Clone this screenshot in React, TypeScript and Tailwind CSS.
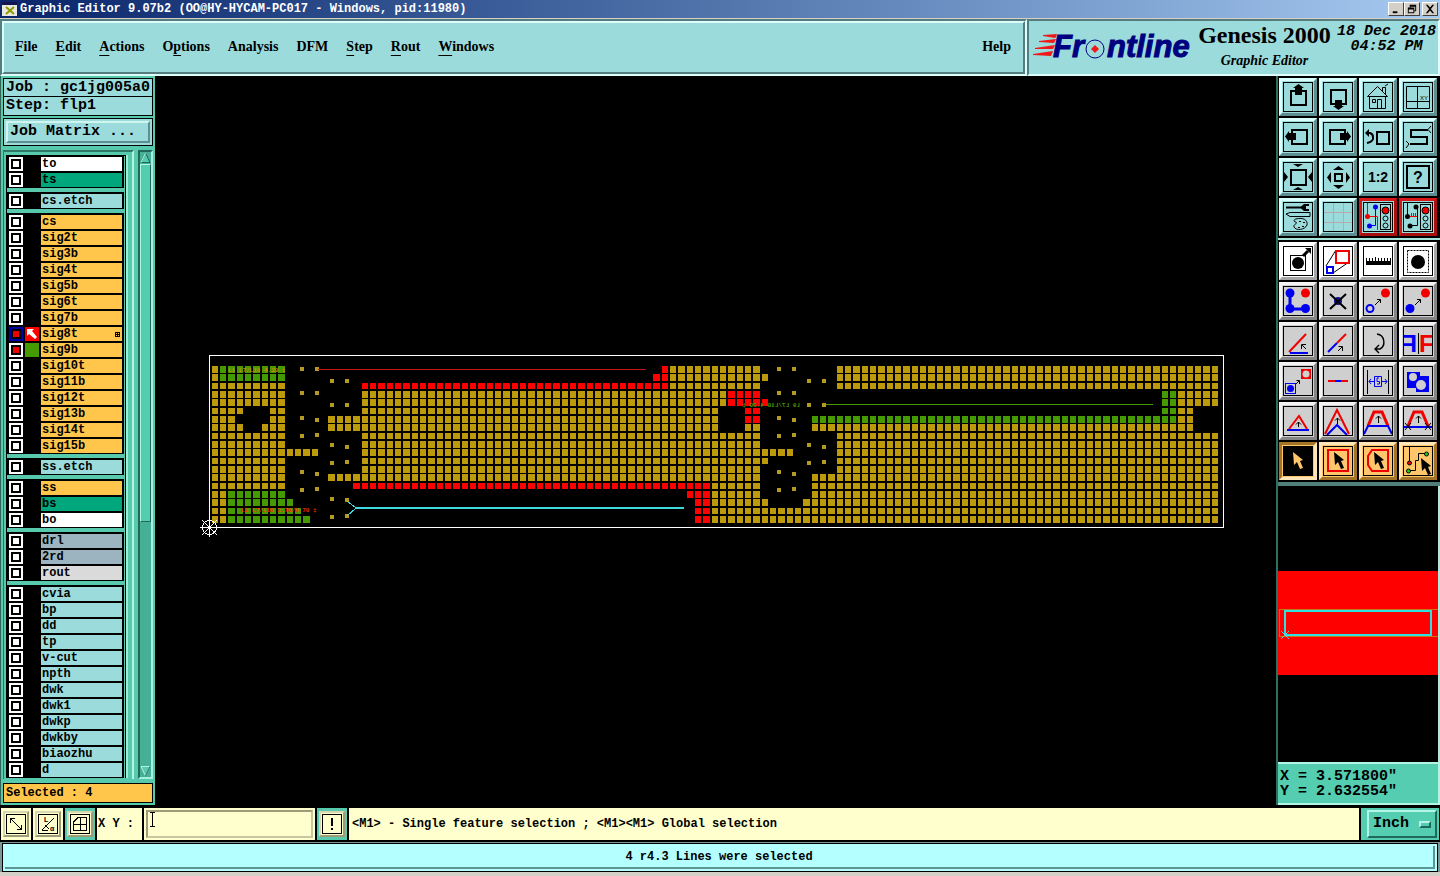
import { ReactNode, useState } from "react";

type Tone = "white" | "green" | "aqua" | "amber" | "steel" | "silver";

interface Layer {
  name: string;
  tone: Tone;
}

const toneClass: Record<Tone, string> = {
  white: "bg-white",
  green: "bg-[#00a67c]",
  aqua: "bg-[#9bdbdb]",
  amber: "bg-[#ffc64b]",
  steel: "bg-[#9cb4c0]",
  silver: "bg-[#dadada]",
};

const make = (tone: Tone, names: string): Layer[] =>
  names.split(" ").map((name) => ({ name, tone }));

const layerGroups: Layer[][] = [
  [...make("white", "to"), ...make("green", "ts")],
  make("aqua", "cs.etch"),
  make("amber", "cs sig2t sig3b sig4t sig5b sig6t sig7b sig8t sig9b sig10t sig11b sig12t sig13b sig14t sig15b"),
  make("aqua", "ss.etch"),
  [...make("amber", "ss"), ...make("green", "bs"), ...make("white", "bo")],
  [...make("steel", "drl 2rd"), ...make("silver", "rout")],
  make("aqua", "cvia bp dd tp v-cut npth dwk dwk1 dwkp dwkby biaozhu d"),
];

const menus: [string, number][] = [
  ["File", 0],
  ["Edit", 0],
  ["Actions", 0],
  ["Options", 1],
  ["Analysis", -1],
  ["DFM", -1],
  ["Step", 0],
  ["Rout", 0],
  ["Windows", 0],
];

const RED = "#f00000";
const BLUE = "#0000f0";

/* ---------- board ---------- */

// row -> runs of [first column, last column, colour]
type Run = [number, number, "y" | "r" | "g"];

const copper: Run[][] = [
  [[0, 0, "y"], [1, 8, "g"], [54, 54, "r"], [55, 65, "y"], [75, 120, "y"]],
  [[0, 0, "y"], [1, 8, "g"], [53, 54, "r"], [55, 66, "y"], [75, 120, "y"]],
  [[0, 8, "y"], [18, 54, "r"], [55, 65, "y"], [75, 120, "y"]],
  [[0, 8, "y"], [18, 61, "y"], [62, 65, "r"], [114, 115, "g"], [116, 120, "y"]],
  [[0, 8, "y"], [18, 61, "y"], [62, 66, "r"], [114, 115, "g"], [116, 120, "y"]],
  [[0, 3, "y"], [7, 8, "y"], [18, 60, "y"], [64, 65, "r"], [114, 115, "g"], [116, 117, "y"]],
  [[0, 2, "y"], [7, 8, "y"], [14, 60, "y"], [64, 65, "r"], [72, 115, "g"], [116, 117, "y"]],
  [[0, 3, "y"], [6, 8, "y"], [14, 60, "y"], [64, 65, "y"], [72, 117, "y"]],
  [[0, 8, "y"], [18, 65, "y"], [75, 120, "y"]],
  [[0, 8, "y"], [18, 65, "y"], [75, 120, "y"]],
  [[0, 12, "y"], [18, 69, "y"], [75, 120, "y"]],
  [[0, 8, "y"], [18, 66, "y"], [75, 120, "y"]],
  [[0, 8, "y"], [18, 65, "y"], [75, 120, "y"]],
  [[0, 8, "y"], [14, 65, "y"], [72, 120, "y"]],
  [[0, 8, "y"], [17, 59, "r"], [60, 65, "y"], [72, 120, "y"]],
  [[0, 1, "y"], [2, 8, "g"], [57, 59, "r"], [60, 65, "y"], [72, 120, "y"]],
  [[0, 1, "y"], [2, 9, "g"], [58, 59, "r"], [60, 66, "y"], [71, 120, "y"]],
  [[0, 1, "y"], [2, 10, "g"], [58, 59, "r"], [60, 120, "y"]],
  [[0, 1, "y"], [2, 11, "g"], [58, 59, "r"], [60, 120, "y"]],
];

const copperFill = { y: "#bd9a0c", r: "#ff0000", g: "#459a00" };

const padsLeft: [number, number][] = [
  [300, 367], [315, 367], [330, 379], [345, 379], [300, 391], [315, 391],
  [330, 403], [345, 403], [300, 416], [315, 418], [300, 434], [315, 433],
  [330, 443], [345, 445], [330, 461], [345, 460], [300, 470], [315, 472],
  [300, 488], [315, 487],
];
const pads: [number, number][] = [
  ...padsLeft,
  ...padsLeft.map(([x, y]): [number, number] => [x + 477, y]),
  [330, 497], [345, 498], [330, 515], [345, 514],
];

function Board() {
  const cells: ReactNode[] = [];
  copper.forEach((runs, r) => {
    const y = Math.round(366 + (r * 25) / 3);
    runs.forEach(([from, to, c]) => {
      for (let i = from; i <= to; i++) {
        cells.push(
          <rect
            key={`${r}-${i}`}
            x={Math.floor(212 + (i * 25) / 3)}
            y={y}
            width={i % 3 === 2 ? 7 : 6}
            height={r % 3 === 2 ? 6 : 7}
            fill={copperFill[c]}
          />
        );
      }
    });
  });

  return (
    <svg viewBox="155 76 1121 729" className="w-full h-full block" shapeRendering="crispEdges">
      {cells}
      {pads.map(([x, y], i) => (
        <rect key={i} x={x} y={y} width="4" height="4" fill="#b39a22" />
      ))}
      <g fontFamily="Liberation Mono, monospace" fontSize="6" fontWeight="700">
        <text x="228" y="372" fill="#d08a00">L1 L7/L10 4.20 ‡</text>
        <text x="241" y="512" fill="#ff2800">L8 L7/L10 3.70/0.70 ‡</text>
        <text x="-800" y="407" fill="#459a00" transform="scale(-1 1)">L9 L7/L10 4.20 ‡</text>
      </g>
      <rect x="209.5" y="355.5" width="1014" height="172" fill="none" stroke="#fff" />
      <rect x="318" y="369" width="328" height="1" fill="#c01818" />
      <rect x="826" y="404" width="327" height="1" fill="#459a00" />
      <rect x="356" y="507" width="328" height="2" fill="#3fd8dc" />
      <path d="M347 501L356 508L347 516" stroke="#3fd8dc" fill="none" />
      <g stroke="#fff" fill="none">
        <circle cx="209.5" cy="527.5" r="7" />
        <path d="M200 527.5H219M209.5 518V537M202 520L217 535M217 520L202 535" />
      </g>
    </svg>
  );
}

/* ---------- toolbar icons, drawn on a 30 x 30 grid ---------- */

interface Tool {
  label: string;
  art: ReactNode;
}

const trafficLight = (
  <g stroke="#000">
    <rect x="17.5" y="2.5" width="10" height="25" fill="#9bdbdb" />
    <circle cx="22.5" cy="8.5" r="3.5" fill={RED} />
    <circle cx="22.5" cy="16.5" r="2.5" fill="none" />
    <circle cx="22.5" cy="23.5" r="2.5" fill="none" />
  </g>
);

const cursor = "M0 0L10 8L7 9L10 16L7 17L4 10L1 13Z";

const viewTools: Tool[] = [
  {
    label: "Pan up",
    art: (
      <>
        <path d="M8 9H23V23H8Z" fill="none" stroke="#000" strokeWidth="2" />
        <path d="M15.5 2L21 6H19V13H12V6H10Z" />
      </>
    ),
  },
  {
    label: "Pan down",
    art: (
      <>
        <path d="M8 8H23V22H8Z" fill="none" stroke="#000" strokeWidth="2" />
        <path d="M15.5 28L21 24H19V18H12V24H10Z" />
      </>
    ),
  },
  {
    label: "Home",
    art: (
      <path
        d="M4.5 14.5L14.5 4.5L24.5 14.5ZM6.5 14.5V26.5H22.5V14.5M14.5 26.5V17.5H18.5V26.5M9.5 17.5H12.5V20.5H9.5ZM19.5 9V5.5H22.5V12.5M22 4L25 2"
        fill="none"
        stroke="#000"
      />
    ),
  },
  {
    label: "Zoom window",
    art: (
      <>
        <path d="M3.5 4.5H26.5V26.5H3.5Z" fill="none" stroke="#000" />
        <path d="M14.5 4V26M4 19.5H26" stroke="#000" />
        <text x="17" y="18" fontFamily="Liberation Sans, sans-serif" fontSize="6">
          XY
        </text>
      </>
    ),
  },
  {
    label: "Pan left",
    art: (
      <>
        <path d="M9 8H24V22H9Z" fill="none" stroke="#000" strokeWidth="2" />
        <path d="M2 14.5L6 9V11H13V18H6V20Z" />
      </>
    ),
  },
  {
    label: "Pan right",
    art: (
      <>
        <path d="M7 8H22V22H7Z" fill="none" stroke="#000" strokeWidth="2" />
        <path d="M28 14.5L24 9V11H17V18H24V20Z" />
      </>
    ),
  },
  {
    label: "Previous view",
    art: (
      <>
        <path d="M14 10H26V22H14Z" fill="none" stroke="#000" strokeWidth="2" />
        <path d="M5 11H7Q10 12 10 15V17Q9 20 4 21" fill="none" stroke="#000" strokeWidth="2" />
        <path d="M2 11L6 7V15Z" />
      </>
    ),
  },
  {
    label: "Snap trace",
    art: (
      <>
        <path d="M25 8H8V15H24V22H7" fill="none" stroke="#000" strokeWidth="2" />
        <path d="M28 4L25 7.5L28 11M3 19L6 22L3 26" fill="none" stroke="#000" />
      </>
    ),
  },
  {
    label: "Zoom in",
    art: (
      <>
        <path d="M8 8H23V23H8Z" fill="none" stroke="#000" strokeWidth="2" />
        <path d="M10 2H20L15 5ZM10 28H20L15 25ZM1 10V20L5 15ZM29 10V20L25 15Z" />
      </>
    ),
  },
  {
    label: "Zoom out",
    art: (
      <>
        <path d="M12 12H19V19H12Z" fill="none" stroke="#000" strokeWidth="2" />
        <path d="M10 8H21L15.5 4ZM10 23H21L15.5 27ZM8 10V21L4 15.5ZM23 10V21L27 15.5Z" />
      </>
    ),
  },
  {
    label: "Zoom factor",
    art: (
      <text x="15" y="20" textAnchor="middle" fontFamily="Liberation Sans, sans-serif" fontWeight="700" fontSize="14">
        1:2
      </text>
    ),
  },
  {
    label: "Help",
    art: (
      <>
        <path d="M4 4H26V26H4Z" fill="none" stroke="#000" strokeWidth="2" />
        <text x="15" y="21" textAnchor="middle" fontFamily="Liberation Sans, sans-serif" fontWeight="700" fontSize="16">
          ?
        </text>
      </>
    ),
  },
  {
    label: "Setup",
    art: (
      <>
        <path d="M3 4.5H18L21 2H26V4H23V7H26V9H21L18 6.5H3Z" />
        <path d="M3 12L7 10.5H27V14.5H7Z" fill="none" stroke="#000" />
        <path d="M13 17C20 15 25 18 24 23C22 28 13 29 11 25C10 22 15 22 13 20C10 20 11 17 13 17Z" fill="none" stroke="#000" />
        <path d="M16 19.5H18M20 20.5H22M19 24.5H21M15 25.5H17" fill="none" stroke="#000" />
      </>
    ),
  },
  {
    label: "Grid",
    art: <path d="M10.5 1V29M20.5 1V29M1 10.5H29M1 20.5H29" stroke="#b9a9ad" />,
  },
  {
    label: "Netlist on",
    art: (
      <>
        <path d="M4.5 1V14M4.5 14.5H14.5V28" stroke={RED} fill="none" />
        <circle cx="4.5" cy="14.5" r="2.5" fill={RED} />
        <path d="M12.5 5V23.5H6" stroke={BLUE} fill="none" />
        <circle cx="12.5" cy="5" r="2.5" fill={BLUE} />
        <circle cx="6.5" cy="24" r="2.5" fill={BLUE} />
        {trafficLight}
      </>
    ),
  },
  {
    label: "Netlist off",
    art: (
      <>
        <path d="M4.5 1V14M14.5 5V23.5H6" stroke="#000" fill="none" />
        <circle cx="4.5" cy="14.5" r="2.5" />
        <circle cx="13" cy="5" r="2.5" />
        <circle cx="7" cy="24" r="2.5" />
        <path d="M7 14.5H14M8.5 11V15M10.5 11V15M12.5 11V15" stroke={RED} />
        {trafficLight}
      </>
    ),
  },
];

const measureTools: Tool[] = [
  {
    label: "Select by reference",
    art: (
      <>
        <rect x="7.5" y="9.5" width="15" height="15" fill="none" stroke="#000" />
        <circle cx="15" cy="17" r="6" />
        <path d="M20 10L25 5" stroke="#000" strokeWidth="3" />
        <path d="M22 2H28V8Z" />
      </>
    ),
  },
  {
    label: "Resize",
    art: (
      <>
        <path d="M3 20L13 4M10 27L26 16" stroke="#000" />
        <rect x="13" y="5" width="13" height="12" fill="none" stroke={RED} strokeWidth="2" />
        <rect x="4" y="21" width="6" height="6" fill="none" stroke={BLUE} strokeWidth="2" />
      </>
    ),
  },
  {
    label: "Ruler",
    art: <path d="M3 19V12H4V15H6V12H7V15H9V12H10V15H12V11H13V15H15V12H16V15H18V12H19V15H21V12H22V15H24V12H25V15H27V12H28V19Z" />,
  },
  {
    label: "Area select",
    art: (
      <>
        <rect x="4.5" y="4.5" width="21" height="22" fill="none" stroke="#000" strokeDasharray="2 1" />
        <circle cx="15" cy="16" r="7" />
      </>
    ),
  },
];

const editTools: Tool[] = [
  {
    label: "Copy",
    art: (
      <>
        <path d="M7 7V23H23" fill="none" stroke={BLUE} strokeWidth="3" />
        <circle cx="7" cy="7" r="4.5" fill={BLUE} />
        <circle cx="7" cy="22.5" r="4.5" fill={BLUE} />
        <circle cx="22.5" cy="22.5" r="4.5" fill={BLUE} />
        <circle cx="22.5" cy="7" r="4.5" fill={RED} />
      </>
    ),
  },
  {
    label: "Delete",
    art: (
      <>
        <circle cx="15" cy="15" r="4" fill="#1010a0" />
        <path d="M7 8L23 23M23 8L7 23" stroke="#000" strokeWidth="2" />
      </>
    ),
  },
  {
    label: "Move",
    art: (
      <>
        <circle cx="7" cy="22.5" r="3.5" fill="none" stroke={BLUE} strokeWidth="2" />
        <circle cx="22.5" cy="7" r="4.5" fill={RED} />
        <path d="M12 19L17 14M14 13.5H17.5V17" fill="none" stroke="#000" />
      </>
    ),
  },
  {
    label: "Copy to",
    art: (
      <>
        <circle cx="7" cy="22.5" r="4.5" fill={BLUE} />
        <circle cx="22.5" cy="7" r="4.5" fill={RED} />
        <path d="M12 19L17 14M14 13.5H17.5V17" fill="none" stroke="#000" />
      </>
    ),
  },
  {
    label: "Rotate",
    art: (
      <>
        <path d="M6 26L23 8" stroke={RED} strokeWidth="2" />
        <path d="M7 27H25" stroke={BLUE} strokeWidth="2" />
        <path d="M23 23L19 19M18.5 23V18.5H23" fill="none" stroke="#000" />
      </>
    ),
  },
  {
    label: "Stretch",
    art: (
      <>
        <path d="M5 26L14 17" stroke={BLUE} strokeWidth="2" />
        <path d="M14 17L23 8" stroke={RED} strokeWidth="2" />
        <path d="M15 25L19 21M15.5 20.5H19.5V25" fill="none" stroke="#000" />
      </>
    ),
  },
  {
    label: "Rotate feature",
    art: (
      <>
        <path d="M14 8C22 9 23 20 17 23H12M16 19L12 23L16 27" fill="none" stroke="#000" strokeWidth="1.4" />
      </>
    ),
  },
  {
    label: "Mirror",
    art: (
      <g fontFamily="Liberation Sans, sans-serif" fontWeight="700" fontSize="24">
        <text x="-14" y="26" fill={BLUE} transform="scale(-1 1)">F</text>
        <path d="M15.5 7V28" stroke="#000" />
        <text x="16" y="26" fill={RED}>F</text>
      </g>
    ),
  },
  {
    label: "Transform",
    art: (
      <>
        <rect x="2.5" y="17.5" width="10" height="10" fill="none" stroke={BLUE} />
        <circle cx="7.5" cy="22.5" r="3.5" fill={BLUE} />
        <path d="M18 3H28V13H18Z" fill={RED} />
        <circle cx="23" cy="8" r="3.5" fill="#cfcfcf" />
        <path d="M13 18L16 15M13.5 14.5H16.5V18" fill="none" stroke="#000" />
      </>
    ),
  },
  {
    label: "Break",
    art: (
      <>
        <path d="M5 15H25" stroke={RED} strokeWidth="2" />
        <path d="M12 15H18" stroke={BLUE} strokeWidth="2" />
      </>
    ),
  },
  {
    label: "Spacing",
    art: (
      <>
        <path d="M4.5 4V28M25.5 4V28" stroke="#000" />
        <path d="M6 15.5H11M8 13L6 15.5L8 18M19 15.5H24M22 13L24 15.5L22 18M11.5 10.5H18.5V20.5H11.5ZM16 12H14V15.5H16.5V18H14" fill="none" stroke={BLUE} />
      </>
    ),
  },
  {
    label: "Merge",
    art: (
      <>
        <path d="M4 6H17V10H26V26H13V22H4Z" fill={BLUE} />
        <circle cx="10" cy="11" r="4" fill="#cfcfcf" />
        <circle cx="18" cy="19" r="5" fill="#cfcfcf" />
      </>
    ),
  },
  {
    label: "Chamfer",
    art: (
      <>
        <path d="M6 23L16 10L24 23" fill="none" stroke={RED} strokeWidth="2" />
        <path d="M4 24H26" stroke={BLUE} strokeWidth="2" />
        <path d="M15.5 21V16M13 18.5L15.5 16L18 18.5" fill="none" stroke="#000" />
      </>
    ),
  },
  {
    label: "Extend",
    art: (
      <>
        <path d="M2 28L14 4L26 28" fill="none" stroke={RED} strokeWidth="2" />
        <path d="M4 29L14 19L24 29" fill="none" stroke={BLUE} strokeWidth="2" />
        <path d="M14.5 18V12M12 14.5L14.5 12L17 14.5" fill="none" stroke="#000" />
      </>
    ),
  },
  {
    label: "Trim",
    art: (
      <>
        <path d="M5 20L11 6H19L25 20" fill="none" stroke={RED} strokeWidth="3" />
        <path d="M1 28L5 20H25L29 28" fill="none" stroke={BLUE} strokeWidth="2" />
        <path d="M15.5 17V10M13 12.5L15.5 10L18 12.5" fill="none" stroke="#000" />
      </>
    ),
  },
  {
    label: "Offset",
    art: (
      <>
        <path d="M5 20L11 6H19L25 20" fill="none" stroke={RED} strokeWidth="3" />
        <path d="M1 21H29" stroke={BLUE} strokeWidth="2" />
        <path d="M15.5 17V10M13 12.5L15.5 10L18 12.5M2 17L8 24M8 17L2 24M22 17L28 24M28 17L22 24" fill="none" stroke="#000" />
      </>
    ),
  },
];

const selectTools: Tool[] = [
  {
    label: "Select feature",
    art: (
      <>
        <rect width="30" height="30" />
        <path d={cursor} transform="translate(10 6)" fill="#ffc66b" />
      </>
    ),
  },
  {
    label: "Select rectangle",
    art: (
      <>
        <rect x="5" y="4" width="20" height="21" fill="none" stroke={RED} strokeWidth="2" />
        <path d={cursor} transform="translate(11 6)" />
      </>
    ),
  },
  {
    label: "Select polygon",
    art: (
      <>
        <path d="M9 4H25V25H9L5 19V10Z" fill="none" stroke={RED} strokeWidth="2" />
        <path d={cursor} transform="translate(11 6)" />
      </>
    ),
  },
  {
    label: "Select net",
    art: (
      <>
        <path d="M6.5 1V18M24 7.5H15.5V14.5H12.5V24.5H6" fill="none" stroke="#000" />
        <circle cx="6.5" cy="17" r="2" fill={RED} stroke="#000" />
        <circle cx="23.5" cy="8" r="2" fill="#20d020" stroke="#000" />
        <circle cx="5.5" cy="25" r="2" fill="#20d020" stroke="#000" />
        <path d={cursor} transform="translate(18 12)" />
      </>
    ),
  },
];

const skins = {
  aqua: "bg-[#9bdbdb] border-t-[#d8fffb] border-l-[#d8fffb] border-b-[#5d8f90] border-r-[#5d8f90]",
  red: "bg-[#9bdbdb] border-t-[#d81818] border-l-[#d81818] border-b-[#a81010] border-r-[#a81010]",
  white: "bg-white border-t-[#ffffff] border-l-[#ffffff] border-b-[#a5a5a5] border-r-[#a5a5a5]",
  gray: "bg-[#cfcfcf] border-t-[#f4f4f4] border-l-[#f4f4f4] border-b-[#858585] border-r-[#858585]",
  amber: "bg-[#ffc66b] border-t-[#ffe6b8] border-l-[#ffe6b8] border-b-[#a37428] border-r-[#a37428]",
  pressed: "bg-[#ffc66b] border-t-[#a37428] border-l-[#a37428] border-b-[#ffe6b8] border-r-[#ffe6b8]",
};

function ToolButton({ tool, skin }: { tool: Tool; skin: keyof typeof skins }) {
  return (
    <button
      type="button"
      aria-label={tool.label}
      className={`w-[38px] h-[38px] border-3 p-px ${skins[skin]}`}
    >
      <svg viewBox="0 0 30 30" className="w-[30px] h-[30px] block">
        {tool.art}
        <rect x="0.5" y="0.5" width="29" height="29" fill="none" stroke="#000" />
      </svg>
    </button>
  );
}

/* ---------- window parts ---------- */

function TitleBar() {
  return (
    <div className="h-[18px] shrink-0 flex items-center justify-between px-0.5 bg-linear-to-r from-[#0a246a] to-[#a6caf0]">
      <div className="flex items-center gap-0.5">
        <svg viewBox="0 0 16 16" className="w-4 h-4">
          <path d="M0 1H15V15H0Z" fill="#e8e8e0" />
          <path d="M0 1H15V4H0Z" fill="#141450" />
          <path d="M4 6L12 13M12 6L4 13" stroke="#8f9a00" strokeWidth="2" />
        </svg>
        <h1 className="text-xs font-bold text-white whitespace-pre">
          Graphic Editor 9.07b2 (OO@HY-HYCAM-PC017 - Windows, pid:11980)
        </h1>
      </div>
      <div className="flex">
        {[
          ["Minimize", "M4 9H9V11H4Z"],
          ["Restore", "M5 2H12V9H10V11H3V5H5ZM6 4V5H10V8H11V4ZM4 7V10H9V7Z"],
          ["Close", "M3 2H5L7.5 5L10 2H12L8.5 6.5L12 11H10L7.5 8L5 11H3L6.5 6.5Z"],
        ].map(([label, d]) => (
          <button
            key={label}
            type="button"
            aria-label={label}
            className="w-4 h-3.5 bg-[#d4d0c8] border border-t-white border-l-white border-b-[#404040] border-r-[#404040] last:ml-0.5"
          >
            <svg viewBox="0 0 15 13" className="w-3.5 h-3 block">
              <path d={d} fillRule="evenodd" />
            </svg>
          </button>
        ))}
      </div>
    </div>
  );
}

const sunken = "border-2 border-t-[#557d80] border-l-[#557d80] border-b-[#dcfffb] border-r-[#dcfffb]";
const raised = "border-2 border-t-[#dcfffb] border-l-[#dcfffb] border-b-[#557d80] border-r-[#557d80]";

function Header() {
  return (
    <header className="h-[58px] shrink-0 flex border-t border-[#d4d0c8] bg-[#9bdbdb] font-['Liberation_Serif',serif]">
      <div className={`flex-1 min-w-0 ${sunken}`}>
        <nav className={`h-full flex items-center pl-[11px] pr-3 pb-px text-sm leading-5 font-bold ${raised}`}>
          {menus.map(([label, at]) => (
            <button key={label} type="button" className="mr-[18px]">
              {at < 0 ? (
                label
              ) : (
                <>
                  {label.slice(0, at)}
                  <span className="underline underline-offset-4">{label[at]}</span>
                  {label.slice(at + 1)}
                </>
              )}
            </button>
          ))}
          <button type="button" className="ml-auto">Help</button>
        </nav>
      </div>
      <div className={`w-[413px] shrink-0 flex ${sunken}`}>
        <svg viewBox="0 0 165 52" className="w-[165px] h-[52px] shrink-0">
          <g fill="#f01818">
            <path d="M14 14L28 13L27 16L26 17L14 15ZM10 20L27 18L25 22L10 21ZM6 27L26 24L24 28L6 28ZM4 33L24 30L22 35L4 34Z" />
          </g>
          <g
            fill="#000080"
            stroke="#000080"
            fontFamily="Liberation Sans, sans-serif"
            fontWeight="700"
            fontStyle="italic"
            fontSize="31"
          >
            <text x="24" y="36">Fr</text>
            <text x="78" y="36">ntline</text>
          </g>
          <circle cx="66" cy="28" r="9" fill="none" stroke="#000080" />
          <path d="M66 24L70 28L66 32L62 28Z" fill="#f01818" />
        </svg>
        <div className="flex-1 text-center">
          <p className="text-2xl leading-7 font-bold whitespace-nowrap">Genesis 2000</p>
          <p className="mt-1 text-sm leading-4 font-bold italic">Graphic Editor</p>
        </div>
        <div className="w-[103px] pt-[3px] text-center text-[15px] leading-[15px] font-bold italic whitespace-pre font-['Liberation_Mono',monospace]">
          <p>18 Dec 2018</p>
          <p>04:52 PM</p>
        </div>
      </div>
    </header>
  );
}

function LayerRow({ layer }: { layer: Layer }) {
  const work = layer.name === "sig8t";
  const [shown, setShown] = useState(work || layer.name === "sig9b");
  return (
    <label className="h-4 py-px flex gap-0.5 text-xs leading-[14px] font-bold">
      <span className={`w-3.5 h-3.5 p-0.5 ${work ? "bg-[#0000a8]" : "bg-white"}`}>
        <input
          type="checkbox"
          checked={shown}
          onChange={() => setShown(!shown)}
          className="block appearance-none w-2.5 h-2.5 border-2 border-black bg-white checked:bg-[#f00000]"
        />
      </span>
      <span className={`w-3.5 h-3.5 ${work ? "bg-[#ff0000]" : layer.name === "sig9b" ? "bg-[#459a00]" : ""}`}>
        {work && (
          <svg viewBox="0 0 14 14" className="w-3.5 h-3.5 block">
            <path d="M2 2H9L7 4L12 10L10 12L4 7L2 9Z" fill="#fff" />
          </svg>
        )}
      </span>
      <span className={`flex-1 flex items-center justify-between pl-px pr-0.5 ${toneClass[layer.tone]}`}>
        {layer.name}
        {work && (
          <svg viewBox="0 0 5 5" className="w-[5px] h-[5px]">
            <path d="M0 0H5V5H0ZM1 1V2H2V1ZM3 1V2H4V1ZM1 3V4H2V3ZM3 3V4H4V3Z" fillRule="evenodd" />
          </svg>
        )}
      </span>
    </label>
  );
}

function Sidebar() {
  return (
    <aside className="w-[155px] shrink-0 flex flex-col bg-[#57c9ad] border-l border-[#2f6658] px-0.5 pt-0.5 pb-0.5">
      <div className="text-[15px] leading-[18px] font-bold whitespace-pre">
        <p className="h-[19px] px-0.5 border border-black bg-[#9bdbdb]">Job : gc1jg005a0</p>
        <p className="h-[19px] px-0.5 border border-t-0 border-black bg-[#9bdbdb]">Step: flp1</p>
        <div className="mt-0.5 border border-black bg-[#9bdbdb] p-0.5">
          <button
            type="button"
            className="w-full h-[22px] px-0.5 text-left whitespace-pre border-2 border-t-[#d0f5ef] border-l-[#d0f5ef] border-b-[#5d8f90] border-r-[#5d8f90]"
          >
            Job Matrix ...
          </button>
        </div>
      </div>

      <div className="flex-1 min-h-0 mt-1 mb-1 flex">
        <div className="flex-1 min-w-0 overflow-hidden pt-[3px] pl-0.5 border-t-2 border-l border-t-[#2f7766] border-l-[#2f7766] border-r-2 border-r-[#b4f4e4]">
          <div className="flex border-l border-black">
            <div className="flex-1 flex flex-col gap-1 border-t border-r border-black pr-px">
              {layerGroups.map((group, i) => (
                <div key={i} className="bg-black px-0.5 pt-px first:pt-0">
                  {group.map((layer) => (
                    <LayerRow key={layer.name} layer={layer} />
                  ))}
                </div>
              ))}
            </div>
            <div className="w-1.5 border-l-2 border-[#a0ecd8]" />
          </div>
        </div>
        <div className="w-1" />
        <div className="w-[15px] flex flex-col items-center bg-[#45b096] border-2 border-t-[#20685a] border-l-[#20685a] border-b-[#a8f0de] border-r-[#a8f0de]">
          <button type="button" aria-label="Scroll up" className="block h-3">
            <svg viewBox="0 0 11 12" className="w-[11px] h-3 block">
              <path d="M5.5 1L10 10.5H1Z" fill="#57c9ad" stroke="#20685a" />
              <path d="M5.5 1L1 10.5" stroke="#b4f4e4" />
            </svg>
          </button>
          <div className="w-full h-[358px] bg-[#52cdb0] border border-t-[#b4f4e4] border-l-[#b4f4e4] border-b-[#20685a] border-r-[#20685a]" />
          <button type="button" aria-label="Scroll down" className="block h-3 mt-auto">
            <svg viewBox="0 0 11 12" className="w-[11px] h-3 block">
              <path d="M5.5 11L10 1.5H1Z" fill="#57c9ad" stroke="#b4f4e4" />
              <path d="M5.5 11L10 1.5" stroke="#20685a" />
            </svg>
          </button>
        </div>
      </div>

      <p className="h-5 px-0.5 text-xs leading-[18px] font-bold border border-black bg-[#ffc64b]">Selected : 4</p>
    </aside>
  );
}

function ToolPanel() {
  return (
    <aside className="w-[164px] shrink-0 flex flex-col bg-black border-l-2 border-[#2f6f60]">
      <div className="grid grid-cols-[repeat(4,38px)] gap-0.5 pl-px py-0.5 border-b-2 border-[#a8e6da]">
        {viewTools.map((tool, i) => (
          <ToolButton key={tool.label} tool={tool} skin={i > 13 ? "red" : "aqua"} />
        ))}
      </div>
      <div className="grid grid-cols-[repeat(4,38px)] gap-0.5 pl-px py-0.5 border-b-4 border-[#4f7f78]">
        {measureTools.map((tool) => (
          <ToolButton key={tool.label} tool={tool} skin="white" />
        ))}
        {editTools.map((tool) => (
          <ToolButton key={tool.label} tool={tool} skin="gray" />
        ))}
        {selectTools.map((tool, i) => (
          <ToolButton key={tool.label} tool={tool} skin={i === 0 ? "pressed" : "amber"} />
        ))}
      </div>
      <div className="flex-1 min-h-0 border-r-2 border-[#b4e8dc]">
        <svg
          viewBox="0 0 160 274"
          preserveAspectRatio="xMidYMin"
          className="w-full h-full block"
          shapeRendering="crispEdges"
        >
          <rect y="85" width="160" height="104" fill="#ff0000" />
          <path d="M160 123.5H1.5V150.5H160" fill="none" stroke="#c87818" />
          <rect x="7" y="125" width="146" height="24" fill="none" stroke="#2fe0e0" strokeWidth="2" />
          <path d="M3 145L11 153M11 145L3 153" stroke="#6cc8c8" />
        </svg>
      </div>
      <div className="h-[43px] pl-0.5 pt-[5px] text-[15px] leading-[15px] font-bold whitespace-pre bg-[#54cdb0] border-2 border-l-0 border-t-[#b4f4e4] border-b-[#b4f4e4] border-r-[#b4f4e4]">
        <p>X = 3.571800"</p>
        <p>Y = 2.632554"</p>
      </div>
    </aside>
  );
}

function InputButton({ label, green, children }: { label: string; green?: boolean; children: ReactNode }) {
  return (
    <button
      type="button"
      aria-label={label}
      className={`w-[30px] h-8 shrink-0 flex items-center justify-center ${green ? "bg-[#57c9ad]" : "bg-[#ffffcd]"}`}
    >
      <svg
        viewBox="0 0 20 20"
        className="w-[26px] h-[26px] p-px border-2 border-t-[#d8d8b0] border-l-[#d8d8b0] border-b-[#9c9c78] border-r-[#9c9c78] bg-[#ffffcd]"
        fill="none"
        stroke="#000"
        shapeRendering="crispEdges"
      >
        <rect x="0.5" y="0.5" width="19" height="19" />
        {children}
      </svg>
    </button>
  );
}

function CommandBar() {
  return (
    <div className="h-[35px] shrink-0 flex gap-0.5 pt-px pb-0.5 pl-px bg-black text-xs leading-4 font-bold">
      <InputButton label="Absolute">
        <path d="M5 5L15 15M4.5 9V4.5H9M11 15.5H15.5V11" />
      </InputButton>
      <InputButton label="Angle">
        <path d="M4 16L16 4M4 16.5H10M7 11L11 15" />
        <g fill="#000" stroke="none" fontFamily="Liberation Sans, sans-serif" fontSize="7">
          <text x="6" y="8">L</text>
          <text x="12" y="17">α</text>
        </g>
      </InputButton>
      <InputButton label="Grid snap" green>
        <path d="M3.5 8L8 3.5H16.5V16.5H3.5ZM3 10.5H17M10.5 3V17" />
      </InputButton>
      <label htmlFor="xy" className="w-[45px] shrink-0 pl-px flex items-center whitespace-pre bg-[#ffffcd]">
        X Y :
      </label>
      <div className="relative w-[171px] shrink-0 p-0.5 bg-[#ffffcd]">
        <input
          id="xy"
          type="text"
          defaultValue=""
          className="block w-full h-full px-1 bg-[#ffffcd] border-2 border-t-[#9c9c78] border-l-[#9c9c78] border-b-[#c8c8a0] border-r-[#c8c8a0] outline-none"
        />
        <svg viewBox="0 0 5 15" className="absolute left-1.5 top-1 w-[5px] h-[15px] pointer-events-none">
          <path d="M0 0.5H5M0 14.5H5M2.5 0V15" stroke="#000" />
        </svg>
      </div>
      <InputButton label="Warnings" green>
        <path d="M10 4V12M10 14V16" strokeWidth="2" />
      </InputButton>
      <p className="flex-1 flex items-center pl-[3px] bg-[#ffffcd]">
        {"<M1> - Single feature selection ; <M1><M1> Global selection"}
      </p>
      <div className="w-[78px] shrink-0 mr-px p-0.5 pl-1.5 bg-[#54cdb0]">
        <button
          type="button"
          className="w-full h-full px-1 flex items-center justify-between text-[15px] border-2 border-t-[#b4f4e4] border-l-[#b4f4e4] border-b-[#20685a] border-r-[#20685a]"
        >
          Inch
          <span className="w-3 h-[7px] border-2 border-t-[#b4f4e4] border-l-[#b4f4e4] border-b-[#20685a] border-r-[#20685a]" />
        </button>
      </div>
    </div>
  );
}

export default function App() {
  return (
    <div className="h-screen flex flex-col bg-black text-black font-['Liberation_Mono',monospace]">
      <TitleBar />
      <Header />
      <main className="flex-1 min-h-0 flex">
        <Sidebar />
        <section aria-label="Board" className="flex-1 min-w-0 bg-black">
          <Board />
        </section>
        <ToolPanel />
      </main>
      <div className="h-0.5 shrink-0 bg-black" />
      <CommandBar />
      <footer className="shrink-0 bg-[#7a9898] px-0.5 pt-px border-b-4 border-[#d4d0c8]">
        <p className="h-[29px] border border-black bg-[#b4ffff] p-0.5 text-xs font-bold">
          <span className="h-full flex items-center justify-center border-b-2 border-r-2 border-[#5d9494]">
            4 r4.3 Lines were selected
          </span>
        </p>
      </footer>
    </div>
  );
}
